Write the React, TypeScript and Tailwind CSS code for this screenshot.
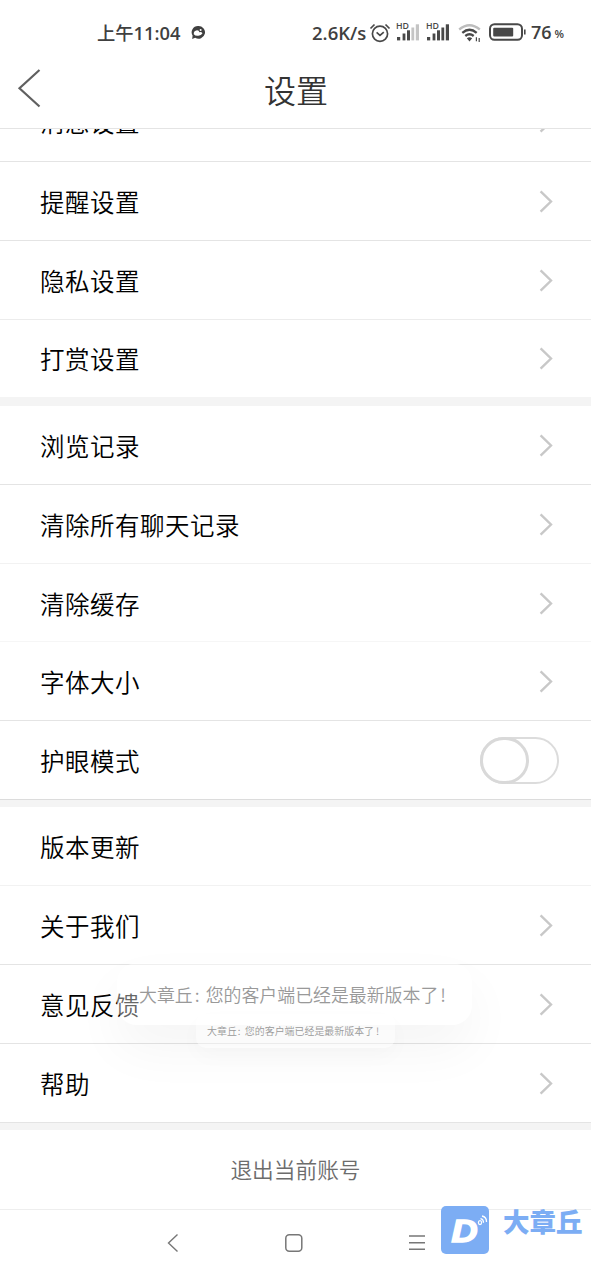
import clsx from "clsx";

type RowProps = {
    label: string;
    height?: string;
    arrow?: boolean;
    toggle?: boolean;
    line?: string;
};

function Arrow() {
    return (
        <svg className="mr-[38px] h-6 w-4 shrink-0" viewBox="0 0 16 24" fill="none" stroke="#c8c8c8" strokeWidth="2.4">
            <path d="M3.6 2.3 14 12.5 3.6 22.7" />
        </svg>
    );
}

function Toggle() {
    return (
        <div className="mr-8 h-[47px] w-[79px] rounded-full border-2 border-[#dcdcdc]">
            <div className="-mt-0.5 -ml-0.5 h-[47px] w-[49px] rounded-full border-[3px] border-[#d9d9d9]" />
        </div>
    );
}

function Row({ label, height = "h-[79px]", arrow = true, toggle = false, line = "border-[#e4e4e4]" }: RowProps) {
    return (
        <div className={clsx("flex shrink-0 items-center justify-between border-b bg-white pl-10", height, line)}>
            <span className="mt-0.5 text-[24.5px] leading-9 font-[350] tracking-[0.5px] text-black">{label}</span>
            {toggle && <Toggle />}
            {arrow && !toggle && <Arrow />}
        </div>
    );
}

function Signal({ weak = false }) {
    return (
        <svg className="-mt-0.5 h-[22px] w-[25px]" viewBox="0 -2 25 22" fill="#484848">
            <text x="0" y="6.3" fontSize="8.5" fontWeight="600" fontFamily="Open Sans" textLength="13" lengthAdjust="spacingAndGlyphs">HD</text>
            <rect x="1" y="14" width="3.2" height="3.4" />
            <rect x="6.6" y="10.5" width="2.8" height="6.9" />
            <rect x="11" y="7.3" width="3" height="10.1" />
            <rect x="15.4" y="4.5" width="2.8" height="12.9" fill={weak ? "#c4c4c4" : "#484848"} />
            <rect x="19.8" y="1.3" width="3.2" height="16.1" fill={weak ? "#c4c4c4" : "#484848"} />
        </svg>
    );
}

function StatusBar() {
    return (
        <div className="flex h-[54px] items-center pt-[11px] pl-[97px] text-[#404040]">
            <span className="w-[94px] text-[18.3px] font-semibold whitespace-nowrap font-['Open_Sans','Noto_Sans_CJK_SC',sans-serif]">
                <span className="font-medium">上午</span>11:04
            </span>
            <svg className="h-4 w-[14px]" viewBox="0 0 14 16">
                <path d="M7 1a6.3 6.3 0 0 0-5.4 9.6L1.2 14l3-1.2A6.4 6.4 0 1 0 7 1z" fill="#404040" />
                <path d="M2.8 9.3Q2.4 6 5.3 5.4 8 5 8.4 7.2q1.8-.8 3.1 1-1.1 2.4-4.2 2.6-2.8.4-4.5-1.5z" fill="white" />
                <circle cx="9.6" cy="5" r="1" fill="white" />
            </svg>
            <span className="ml-[107px] w-[57px] text-[18.5px] font-semibold whitespace-nowrap font-['Open_Sans',sans-serif]">
                2.6K/s
            </span>
            <svg className="h-5 w-[22px]" viewBox="0 0 22 20" fill="none" stroke="#484848" strokeWidth="1.7">
                <circle cx="11" cy="10.7" r="7.6" />
                <path d="m7.6 9.4 3.4 3 3.8-3.2M1.5 5.5l4-4M20.5 5.5l-4-4" />
            </svg>
            <div className="ml-[5px] flex gap-[5px]">
                <Signal weak />
                <Signal />
            </div>
            <svg className="ml-[7px] h-[20px] w-6" viewBox="0 0 24 20" fill="none" stroke="#484848" strokeWidth="2.3">
                <path d="M1.2 6.5Q11.5-2 21.8 6.5" stroke="#bdbdbd" />
                <path d="M4.3 9.8q7.2-6 14.4 0M7.3 13q4.2-3.4 8.4 0" />
                <path d="m8.8 15.2 2.7 3.3 2.7-3.3q-2.7-1.8-5.4 0z" fill="#484848" stroke="none" />
                <path d="M18.4 14.2v4M21.2 15v4" strokeWidth="1.2" />
            </svg>
            <svg className="ml-[7px] -mt-0.5 h-[18px] w-[37px]" viewBox="0 0 37 18">
                <rect x="1" y="1.2" width="32" height="15.6" rx="4.5" fill="none" stroke="#484848" strokeWidth="2" />
                <rect x="4.2" y="4.7" width="20" height="8.8" rx="1" fill="#484848" />
                <path d="M35.8 6.5v5" stroke="#484848" strokeWidth="1.6" />
            </svg>
            <span className="ml-[5px] -mt-px text-[18px] font-semibold font-['Open_Sans',sans-serif]">76</span>
            <span className="mt-1 ml-[3px] text-[11px] font-semibold font-['Open_Sans',sans-serif]">%</span>
        </div>
    );
}

function NavBar() {
    return (
        <div className="flex h-[70px] items-start bg-white pt-[23px] pl-[166px]">
            <svg className="h-5 w-3.5" viewBox="0 0 14 20" fill="none" stroke="#777" strokeWidth="1.4">
                <path d="M11.5 1.5 2.5 10l9 8.5" />
            </svg>
            <svg className="ml-[104px] h-5 w-5" viewBox="0 0 20 20" fill="none" stroke="#777" strokeWidth="1.5">
                <rect x="1.8" y="1.8" width="16" height="16.4" rx="3.5" />
            </svg>
            <svg className="ml-[104px] h-5 w-[18px]" viewBox="0 0 18 20" stroke="#777" strokeWidth="1.4">
                <path d="M1 3h16M1 9.7h16M1 16.3h16" />
            </svg>
        </div>
    );
}

function Watermark() {
    return (
        <div className="absolute top-[1206px] left-[441px] flex">
            <div className="h-12 w-12 rounded-[5px] bg-[#7cadf4]">
                <svg className="h-12 w-12" viewBox="0 0 48 48" fill="none" stroke="white">
                    <text x="10.5" y="36" fill="white" stroke="white" strokeWidth="1.6" fontSize="31" fontWeight="700" fontStyle="italic" fontFamily="Liberation Sans" textLength="26" lengthAdjust="spacingAndGlyphs">D</text>
                    <ellipse cx="39" cy="16.6" rx="1.6" ry="2" strokeWidth="1.2" />
                    <path d="M39.5 12.6q3 .5 3 4.2M41 10q4.7 1 4.5 6" strokeWidth="1.3" />
                </svg>
            </div>
            <span className="ml-[14px] -mt-[3px] text-[26.5px] leading-9 font-black whitespace-nowrap text-[#7cadf4]">
                大章丘
            </span>
        </div>
    );
}

export default function App() {
    return (
        <div className="relative h-[1280px] w-[591px] overflow-hidden bg-white font-['Noto_Sans_CJK_SC',sans-serif]">
            <StatusBar />
            <div className="flex h-[75px] items-center border-b border-[#e4e4e4] pl-[17px]">
                <svg className="-mt-1.5 h-[40px] w-[24px]" viewBox="0 0 24 40" fill="none" stroke="#606060" strokeWidth="2.2">
                    <path d="M22.5 2 2.5 20.3 22.5 38.5" />
                </svg>
                <h1 className="-mt-[5px] ml-[223px] text-[32px] leading-10 font-[350] text-[#333]">设置</h1>
            </div>

            <div className="flex h-[33px] flex-col justify-end overflow-hidden">
                <Row label="消息设置" height="h-[81px]" />
            </div>
            <Row label="提醒设置" />
            <Row label="隐私设置" line="border-[#ececec]" />
            <Row label="打赏设置" height="h-[77px]" line="border-white" />
            <div className="h-[9px] bg-[#f4f4f4]" />
            <Row label="浏览记录" />
            <Row label="清除所有聊天记录" line="border-[#f2f2f2]" />
            <Row label="清除缓存" height="h-[78px]" line="border-[#f6f6f6]" />
            <Row label="字体大小" />
            <Row label="护眼模式" toggle line="border-[#dcdcdc]" />
            <div className="h-[7px] bg-[#f4f4f4]" />
            <Row label="版本更新" arrow={false} line="border-[#f2f2f2]" />
            <Row label="关于我们" />
            <Row label="意见反馈" />
            <Row label="帮助" />
            <div className="h-[7px] bg-[#f4f4f4]" />
            <div className="flex h-20 items-center justify-center border-b border-[#eee] text-[21.7px] font-[350] text-[#6c6c6c]">
                退出当前账号
            </div>
            <NavBar />

            <div className="absolute top-[963px] left-[117px] flex h-[62px] w-[355px] items-center rounded-[20px] bg-white/40 pt-px pl-[22px] text-[17.9px] font-[350] whitespace-nowrap text-[#999] shadow-[0_24px_52px_rgba(0,0,0,0.045)]">
                <span>大章丘</span>
                <span className="w-[13px] pl-0.5">:</span>
                <span>您的客户端已经是最新版本了</span>
                <span className="ml-0.5">!</span>
            </div>
            <div className="absolute top-[1014px] left-[196px] flex h-[34px] w-[199px] items-center rounded-[10px] bg-white/40 pl-[11px] text-[9.95px] font-[350] whitespace-nowrap text-[#999] shadow-[0_8px_22px_rgba(0,0,0,0.025)]">
                <span>大章丘</span>
                <span className="w-[8px] pl-px">:</span>
                <span>您的客户端已经是最新版本了</span>
                <span className="ml-0.5">!</span>
            </div>
            <Watermark />
        </div>
    );
}
